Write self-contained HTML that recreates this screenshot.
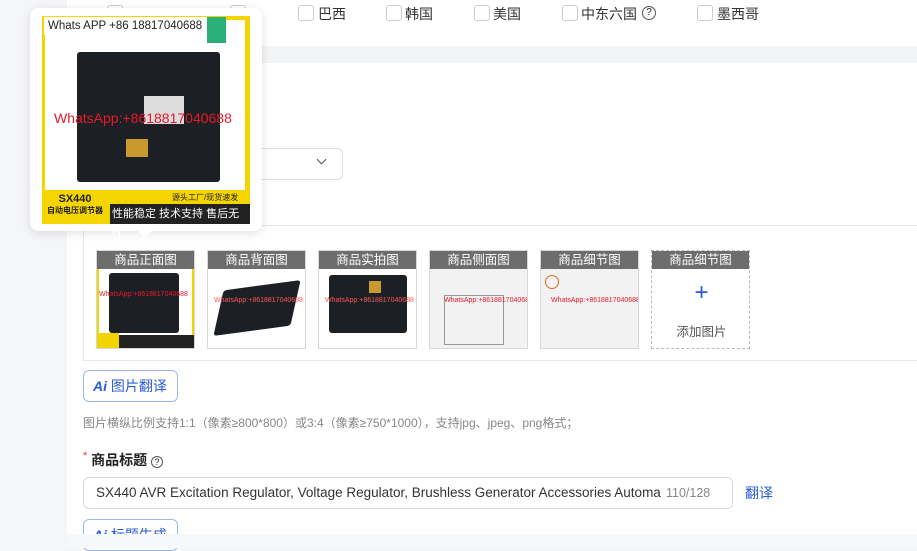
<!DOCTYPE html>
<html><head><meta charset="utf-8"><style>
*{box-sizing:border-box;margin:0;padding:0}
body{width:917px;height:548px;overflow:hidden;background:#f5f6f8;font-family:"Liberation Sans","Noto Sans CJK SC",sans-serif;position:relative;color:#222}
.abs{position:absolute}
.cb{position:absolute;top:5px;width:16px;height:16px;border:1px solid #c9ccd2;border-radius:3px;background:#fff}
.cl{position:absolute;top:4px;font-size:14px;color:#333}
.thumb{position:absolute;top:250px;width:99px;height:99px;border:1px solid #d5d7dc;background:#fff;overflow:hidden}
.thumb .h{position:relative;z-index:2;height:18px;background:#6d6d6d;color:#fff;font-size:12.5px;text-align:center;line-height:18px}
.board{position:absolute;background:#1c1f24;border-radius:3px}
.wm{position:absolute;font-size:7px;color:#e8192c;white-space:nowrap}
.btn{position:absolute;border:1px solid #9fb6f5;border-radius:6px;background:#fff;color:#2a5bd7;font-size:14px;padding-left:9px;line-height:30px}
</style></head><body>
<div class="abs" style="left:67px;top:0;width:850px;height:548px;background:#fff"></div>
<div class="abs" style="left:67px;top:46px;width:850px;height:17px;background:#f3f4f6"></div>

<div class="cb" style="left:107px"></div>
<div class="cb" style="left:230px"></div>
<div class="cb" style="left:298px"></div><div class="cl" style="left:318px">巴西</div>
<div class="cb" style="left:386px"></div><div class="cl" style="left:405px">韩国</div>
<div class="cb" style="left:474px"></div><div class="cl" style="left:493px">美国</div>
<div class="cb" style="left:562px"></div><div class="cl" style="left:581px">中东六国</div>
<div class="abs" style="left:642px;top:6px;width:14px;height:14px;border:1px solid #555;border-radius:50%;font-size:10px;text-align:center;line-height:12px">?</div>
<div class="cb" style="left:697px"></div><div class="cl" style="left:717px">墨西哥</div>

<div class="abs" style="left:150px;top:148px;width:193px;height:32px;border:1px solid #dcdfe4;border-radius:6px"></div>
<div class="abs" style="left:318px;top:156px;width:7px;height:7px;border-right:1.5px solid #555;border-bottom:1.5px solid #555;transform:rotate(45deg)"></div>

<div class="abs" style="left:83px;top:225px;width:840px;height:136px;border:1px solid #e6e8ec;border-right:none"></div>

<div class="thumb" style="left:96px;background:#f2d400"><div class="h">商品正面图</div>
 <div class="abs" style="left:2px;top:18px;width:93px;height:66px;background:#fff"></div>
 <div class="board" style="left:12px;top:22px;width:70px;height:60px"></div><div class="wm" style="left:2px;top:40px">WhatsApp:+8618817040688</div>
 <div class="abs" style="left:0;top:84px;width:99px;height:15px;background:#222"></div><div class="abs" style="left:0;top:82px;width:22px;height:17px;background:#f2d400"></div></div>
<div class="thumb" style="left:207px"><div class="h">商品背面图</div><div class="board" style="left:12px;top:34px;width:74px;height:46px;transform:skewX(-20deg) rotate(-8deg)"></div><div class="wm" style="left:6px;top:46px;color:#f55">WhatsApp:+8618817040688</div></div>
<div class="thumb" style="left:318px"><div class="h">商品实拍图</div><div class="board" style="left:10px;top:24px;width:78px;height:58px"></div><div class="abs" style="left:50px;top:30px;width:12px;height:12px;background:#c9982e"></div><div class="wm" style="left:6px;top:46px;color:#f55">WhatsApp:+8618817040688</div></div>
<div class="thumb" style="left:429px;background:#f2f2f2"><div class="h">商品侧面图</div><div class="abs" style="left:14px;top:44px;width:60px;height:50px;border:1px solid #999"></div><div class="wm" style="left:14px;top:46px">WhatsApp:+8618817040688</div></div>
<div class="thumb" style="left:540px;background:#f2f2f2"><div class="h">商品细节图</div><div class="abs" style="left:4px;top:24px;width:14px;height:14px;border:1.5px solid #e06a1a;border-radius:50%"></div><div class="wm" style="left:10px;top:46px">WhatsApp:+8618817040688</div></div>
<div class="thumb" style="left:651px;background:#fff;border:1px dashed #bbb"><div class="h">商品细节图</div>
<div class="abs" style="left:0;top:28px;width:99px;text-align:center;font-size:24px;color:#2a5bd7">+</div>
<div class="abs" style="left:0;top:70px;width:99px;text-align:center;font-size:12.5px;color:#555">添加图片</div></div>

<div class="btn" style="left:83px;top:370px;width:95px;height:32px"><b><i>Ai</i></b> 图片翻译</div>
<div class="abs" style="left:83px;top:414px;font-size:12px;color:#888">图片横纵比例支持1:1（像素≥800*800）或3:4（像素≥750*1000），支持jpg、jpeg、png格式；</div>
<div class="abs" style="left:83px;top:450px;font-size:14px;font-weight:bold"><span style="color:#e33;font-weight:normal;font-size:11px;vertical-align:top">*</span> 商品标题 <span style="display:inline-block;width:12px;height:12px;border:1px solid #555;border-radius:50%;font-size:9px;text-align:center;line-height:10px;font-weight:normal">?</span></div>
<div class="abs" style="left:83px;top:477px;width:650px;height:32px;border:1px solid #d5d8de;border-radius:6px;font-size:13.5px;line-height:30px;padding-left:12px;color:#333;white-space:nowrap;overflow:hidden">SX440 AVR Excitation Regulator, Voltage Regulator, Brushless Generator Accessories Automa<span style="position:absolute;right:0;top:0;background:#fff;width:70px;color:#888;font-size:12.5px;padding-left:4px">110/128</span></div>
<div class="abs" style="left:745px;top:483px;font-size:14px;color:#2a5bd7">翻译</div>
<div class="btn" style="left:83px;top:519px;width:95px;height:32px"><b><i>Ai</i></b> 标题生成</div>
<div class="abs" style="left:67px;top:534px;width:850px;height:14px;background:#f7f8fa"></div>

<!-- popup -->
<div class="abs" style="left:30px;top:8px;width:232px;height:223px;background:#fff;border-radius:8px;box-shadow:0 2px 10px rgba(0,0,0,.12)"></div>
<div class="abs" style="left:140px;top:226px;width:10px;height:10px;background:#fff;transform:rotate(45deg)"></div>
<div class="abs" style="left:42px;top:16px;width:208px;height:208px;background:#f5d500">
 <div class="abs" style="left:3px;top:4px;width:200px;height:170px;background:#fff"></div>
 <div class="abs" style="left:2px;top:1px;width:176px;height:18px;background:#fff;font-size:11.5px;line-height:18px;padding-left:4px">Whats APP +86 18817040688</div>
 <div class="abs" style="left:165px;top:1px;width:19px;height:26px;background:#2bb07a"></div>
 <div class="board" style="left:35px;top:36px;width:143px;height:130px"></div>
 <div class="abs" style="left:102px;top:80px;width:40px;height:28px;background:#ddd"></div>
 <div class="abs" style="left:84px;top:123px;width:22px;height:18px;background:#c9982e"></div>
 <div class="abs" style="left:12px;top:94px;font-size:14px;color:#e8192c;white-space:nowrap">WhatsApp:+8618817040688</div>
 <div class="abs" style="left:68px;top:188px;width:140px;height:20px;background:#222;color:#fff;font-size:11px;line-height:20px;padding-left:2px">性能稳定 技术支持 售后无忧</div>
 <div class="abs" style="left:2px;top:178px;width:62px;font-size:11px;font-weight:bold;text-align:center;line-height:11px">SX440<br><span style="font-size:8px">自动电压调节器</span></div>
 <div class="abs" style="left:130px;top:176px;font-size:8px">源头工厂/现货速发</div>
</div>
</body></html>
